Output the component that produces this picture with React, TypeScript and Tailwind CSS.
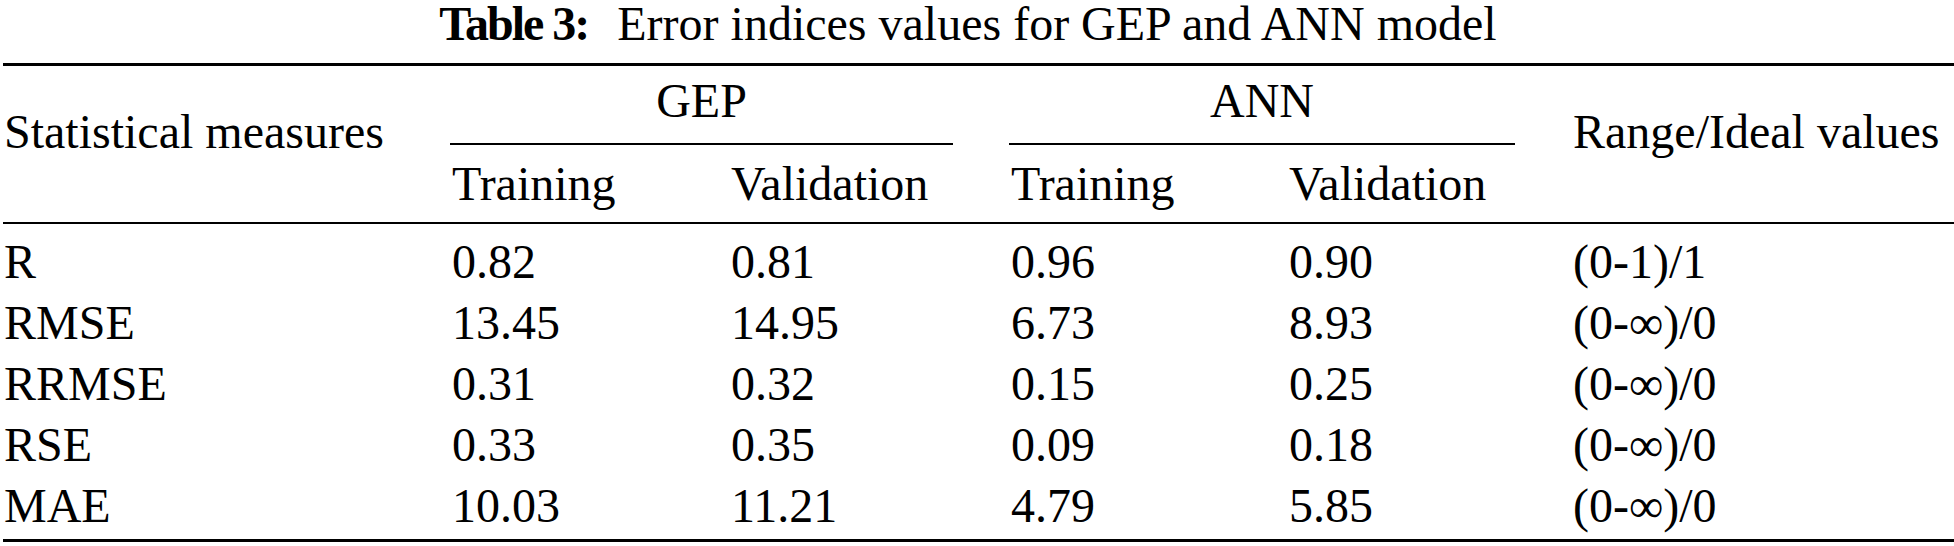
const rows = [
  { measure: "R", gepTrain: "0.82", gepVal: "0.81", annTrain: "0.96", annVal: "0.90", range: "(0-1)/1" },
  { measure: "RMSE", gepTrain: "13.45", gepVal: "14.95", annTrain: "6.73", annVal: "8.93", range: "(0-∞)/0" },
  { measure: "RRMSE", gepTrain: "0.31", gepVal: "0.32", annTrain: "0.15", annVal: "0.25", range: "(0-∞)/0" },
  { measure: "RSE", gepTrain: "0.33", gepVal: "0.35", annTrain: "0.09", annVal: "0.18", range: "(0-∞)/0" },
  { measure: "MAE", gepTrain: "10.03", gepVal: "11.21", annTrain: "4.79", annVal: "5.85", range: "(0-∞)/0" },
]

const cols = "grid grid-cols-[449px_279px_280px_278px_284px_1fr]"

function GroupHeader({ label }: { label: string }) {
  return (
    <div className="col-span-2 flex flex-col">
      {/* label centred over its rule */}
      <div className="-ml-[2px] mr-[58px] text-center leading-[48px]">{label}</div>
      <div className="-ml-[2px] mr-[58px] mt-[18px] h-[2px] bg-black" />
    </div>
  )
}

export default function App() {
  return (
    <div className="w-[1954px] h-[546px] bg-white text-black text-[48px] font-['Liberation_Serif','Times_New_Roman',serif]">
      {/* Caption */}
      <div className="flex justify-center pr-[18px] leading-[48px]">
        <span className="font-bold tracking-[-2px]">Table 3:</span>
        <span className="ml-[29px]">Error indices values for GEP and ANN model</span>
      </div>

      <div className="ml-[3px] mt-[15px]">
        {/* Header */}
        <div className={`${cols} border-t-[3px] border-b-[2px] border-black pt-[11px] pb-[14px]`}>
          <div className="row-span-2 pl-[1px] pt-[31px] leading-[48px]">Statistical measures</div>
          <GroupHeader label="GEP" />
          <GroupHeader label="ANN" />
          <div className="row-span-2 pt-[31px] leading-[48px]">Range/Ideal values</div>

          <div className="mt-[15px] leading-[48px]">Training</div>
          <div className="mt-[15px] leading-[48px]">Validation</div>
          <div className="mt-[15px] leading-[48px]">Training</div>
          <div className="mt-[15px] leading-[48px]">Validation</div>
        </div>

        {/* Body */}
        <div className="border-b-[3px] border-black pt-[7px] pb-[3px]">
          {rows.map((r) => (
            <div key={r.measure} className={`${cols} leading-[61px]`}>
              <div className="pl-[1px]">{r.measure}</div>
              <div>{r.gepTrain}</div>
              <div>{r.gepVal}</div>
              <div>{r.annTrain}</div>
              <div>{r.annVal}</div>
              <div>{r.range}</div>
            </div>
          ))}
        </div>
      </div>
    </div>
  )
}
